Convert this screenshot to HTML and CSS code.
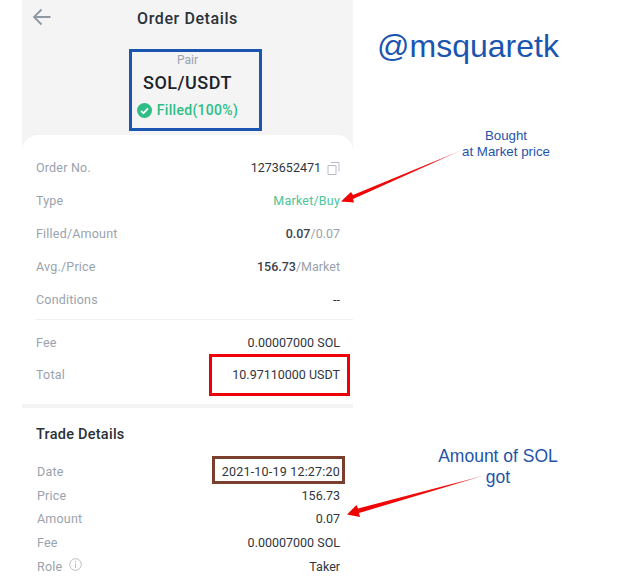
FILE: index.html
```html
<!DOCTYPE html>
<html lang="en">
<head>
    <meta charset="UTF-8">
    <title>Order Details</title>
    <link rel="stylesheet" href="styles.css">
</head>
<body>
    <div class="page">
        <div class="phone">
            <div class="top-bar">
                <svg class="back-icon" width="20" height="18" viewBox="0 0 20 18"><path d="M18.5 9H2M9.5 1.500L2 9l7.500 7.500" fill="none" stroke="#8f98a3" stroke-width="1.800"/></svg>
                <h1>Order Details</h1>
            </div>
            <div class="pair-info">
                <div class="pair-label">Pair</div>
                <div class="pair-name">SOL/USDT</div>
                <div class="pair-status">
                    <svg width="15" height="15" viewBox="0 0 15 15"><circle cx="7.500" cy="7.500" r="7.500" fill="#2ebd85"/><path d="M4 7.800l2.500 2.400L11 5.400" fill="none" stroke="#fff" stroke-width="1.700"/></svg>
                    Filled(100%)
                </div>
            </div>
            <div class="card">
                <div class="order-rows">
                    <div class="row"><span class="label">Order No.</span><span class="value">1273652471<svg class="copy-icon" width="13" height="14" viewBox="0 0 13 14"><path d="M1 4.500h8v9H1zM4 1.500h8v9" fill="none" stroke="#b7bdc6" stroke-width="1"/></svg></span></div>
                    <div class="row"><span class="label">Type</span><span class="value green">Market/Buy</span></div>
                    <div class="row"><span class="label">Filled/Amount</span><span class="value"><b>0.07</b><i>/0.07</i></span></div>
                    <div class="row"><span class="label">Avg./Price</span><span class="value"><b>156.73</b><i>/Market</i></span></div>
                    <div class="row"><span class="label">Conditions</span><span class="value">--</span></div>
                </div>
                <div class="fee-rows">
                    <div class="row"><span class="label">Fee</span><span class="value">0.00007000 SOL</span></div>
                    <div class="row"><span class="label">Total</span><span class="value">10.97110000 USDT</span></div>
                </div>
                <div class="band"></div>
                <h2>Trade Details</h2>
                <div class="trade-rows">
                    <div class="row"><span class="label">Date</span><span class="value date">2021-10-19 12:27:20</span></div>
                    <div class="row"><span class="label">Price</span><span class="value">156.73</span></div>
                    <div class="row"><span class="label">Amount</span><span class="value">0.07</span></div>
                    <div class="row"><span class="label">Fee</span><span class="value">0.00007000 SOL</span></div>
                    <div class="row"><span class="label">Role<svg class="info-icon" width="13" height="13" viewBox="0 0 13 13"><circle cx="6.500" cy="6.500" r="5.800" fill="none" stroke="#b7bdc6"/><path d="M6.500 5.500v4.500M6.500 3v1.300" stroke="#b7bdc6"/></svg></span><span class="value">Taker</span></div>
                </div>
            </div>
        </div>

        <!-- annotations drawn on top of the screenshot -->
        <div class="mark mark-pair"></div>
        <div class="mark mark-total"></div>
        <div class="mark mark-date"></div>
        <div class="handle">@msquaretk</div>
        <div class="note note-market">Bought<br>at Market price</div>
        <div class="note note-amount">Amount of SOL<br>got</div>
        <svg class="arrows" width="640" height="582" viewBox="0 0 640 582">
            <defs>
                <linearGradient id="fade1" gradientUnits="userSpaceOnUse" x1="462" y1="150" x2="342" y2="201"><stop offset="0" stop-color="#e8a0a8"/><stop offset="0.25" stop-color="#f01010"/><stop offset="1" stop-color="#f00000"/></linearGradient>
                <linearGradient id="fade2" gradientUnits="userSpaceOnUse" x1="486" y1="475" x2="348" y2="516"><stop offset="0" stop-color="#e8a0a8"/><stop offset="0.25" stop-color="#f01010"/><stop offset="1" stop-color="#f00000"/></linearGradient>
            </defs>
            <path d="M462 150L353 195 351 192 341 201.500 354 202.500 353 199z" fill="url(#fade1)"/>
            <path d="M486 475L358 508.500 356.500 505 347 514.500 360 517 359 513z" fill="url(#fade2)"/>
        </svg>
    </div>
</body>
</html>
```

FILE: styles.css
```css
body {
    margin: 0;
    background: #fff;
    font-family: Roboto, "Noto Sans", sans-serif;
}
.page {
    position: relative;
    width: 640px;
    height: 582px;
    overflow: hidden;
}
.phone {
    width: 331px;
    height: 582px;
    margin-left: 22px;
    background: #f4f4f5;
}
.top-bar {
    position: relative;
    height: 36px;
    display: flex;
    align-items: center;
    justify-content: center;
}
.top-bar h1 {
    margin: 0;
    font-size: 16px;
    font-weight: 500;
    letter-spacing: 0.6px;
    color: #2b3139;
}
.back-icon {
    position: absolute;
    left: 10px;
    top: 8px;
}
.pair-info {
    height: 99px;
    display: flex;
    flex-direction: column;
    align-items: center;
}
.pair-label {
    margin-top: 17px;
    font-size: 12px;
    line-height: 14px;
    color: #9aa2ad;
}
.pair-name {
    margin-top: 4px;
    font-size: 18px;
    line-height: 24px;
    font-weight: 500;
    letter-spacing: 0.5px;
    color: #1e2329;
}
.pair-status {
    margin-top: 6px;
    display: flex;
    align-items: center;
    gap: 5px;
    font-size: 14px;
    line-height: 18px;
    font-weight: 500;
    letter-spacing: 0.3px;
    color: #2ebd85;
}
.card {
    height: 447px;
    background: #fff;
    border-radius: 16px 16px 0 0;
}
.row {
    display: flex;
    justify-content: space-between;
    align-items: center;
    font-size: 12.500px;
    letter-spacing: 0.2px;
}
.label {
    display: flex;
    align-items: center;
    color: #9aa2ad;
}
.value {
    display: flex;
    align-items: center;
    letter-spacing: 0;
    color: #30353d;
}
.value b {
    font-weight: 500;
    color: #3c424b;
}
.value i {
    font-style: normal;
    color: #9aa2ad;
}
.value.date {
    letter-spacing: 0.2px;
}
.value.green {
    letter-spacing: 0.2px;
    color: #4cc497;
}
.copy-icon {
    margin-left: 6px;
}
.info-icon {
    margin-left: 7px;
    margin-top: -3px;
}
.order-rows {
    padding: 16px 13px 0 14px;
    height: 184px;
    box-sizing: border-box;
}
.order-rows .row {
    height: 33px;
}
.fee-rows {
    margin-left: 14px;
    padding: 6px 13px 0 0;
    height: 85px;
    box-sizing: border-box;
    border-top: 1px solid #eeeff1;
}
.fee-rows .row {
    height: 32.500px;
}
.band {
    height: 4px;
    background: #f4f4f5;
}
.card h2 {
    margin: 0;
    padding: 0 14px;
    height: 45px;
    line-height: 54px;
    font-size: 14.500px;
    font-weight: 500;
    letter-spacing: 0.25px;
    color: #2b3139;
}
.trade-rows {
    padding: 7px 13px 0 15px;
}
.trade-rows .row {
    height: 23.600px;
}
.mark {
    position: absolute;
    box-sizing: border-box;
}
.mark-pair {
    left: 129px;
    top: 49px;
    width: 133px;
    height: 82px;
    border: 3px solid #1a55b0;
}
.mark-total {
    left: 209px;
    top: 354px;
    width: 141px;
    height: 42px;
    border: 3px solid #ee0008;
}
.mark-date {
    left: 212px;
    top: 456px;
    width: 133px;
    height: 28px;
    border: 3px solid #7b3f2e;
}
.handle {
    position: absolute;
    left: 377px;
    top: 27px;
    font-family: "Liberation Sans", sans-serif;
    font-size: 32px;
    line-height: 38px;
    color: #1a55b0;
}
.note {
    position: absolute;
    text-align: center;
    font-family: "Liberation Sans", sans-serif;
    color: #1f55a8;
}
.note-market {
    left: 441px;
    top: 128px;
    width: 130px;
    font-size: 13.300px;
    line-height: 16px;
}
.note-amount {
    left: 418px;
    top: 446px;
    width: 160px;
    font-size: 17.500px;
    line-height: 21px;
}
.arrows {
    position: absolute;
    left: 0;
    top: 0;
}
```
